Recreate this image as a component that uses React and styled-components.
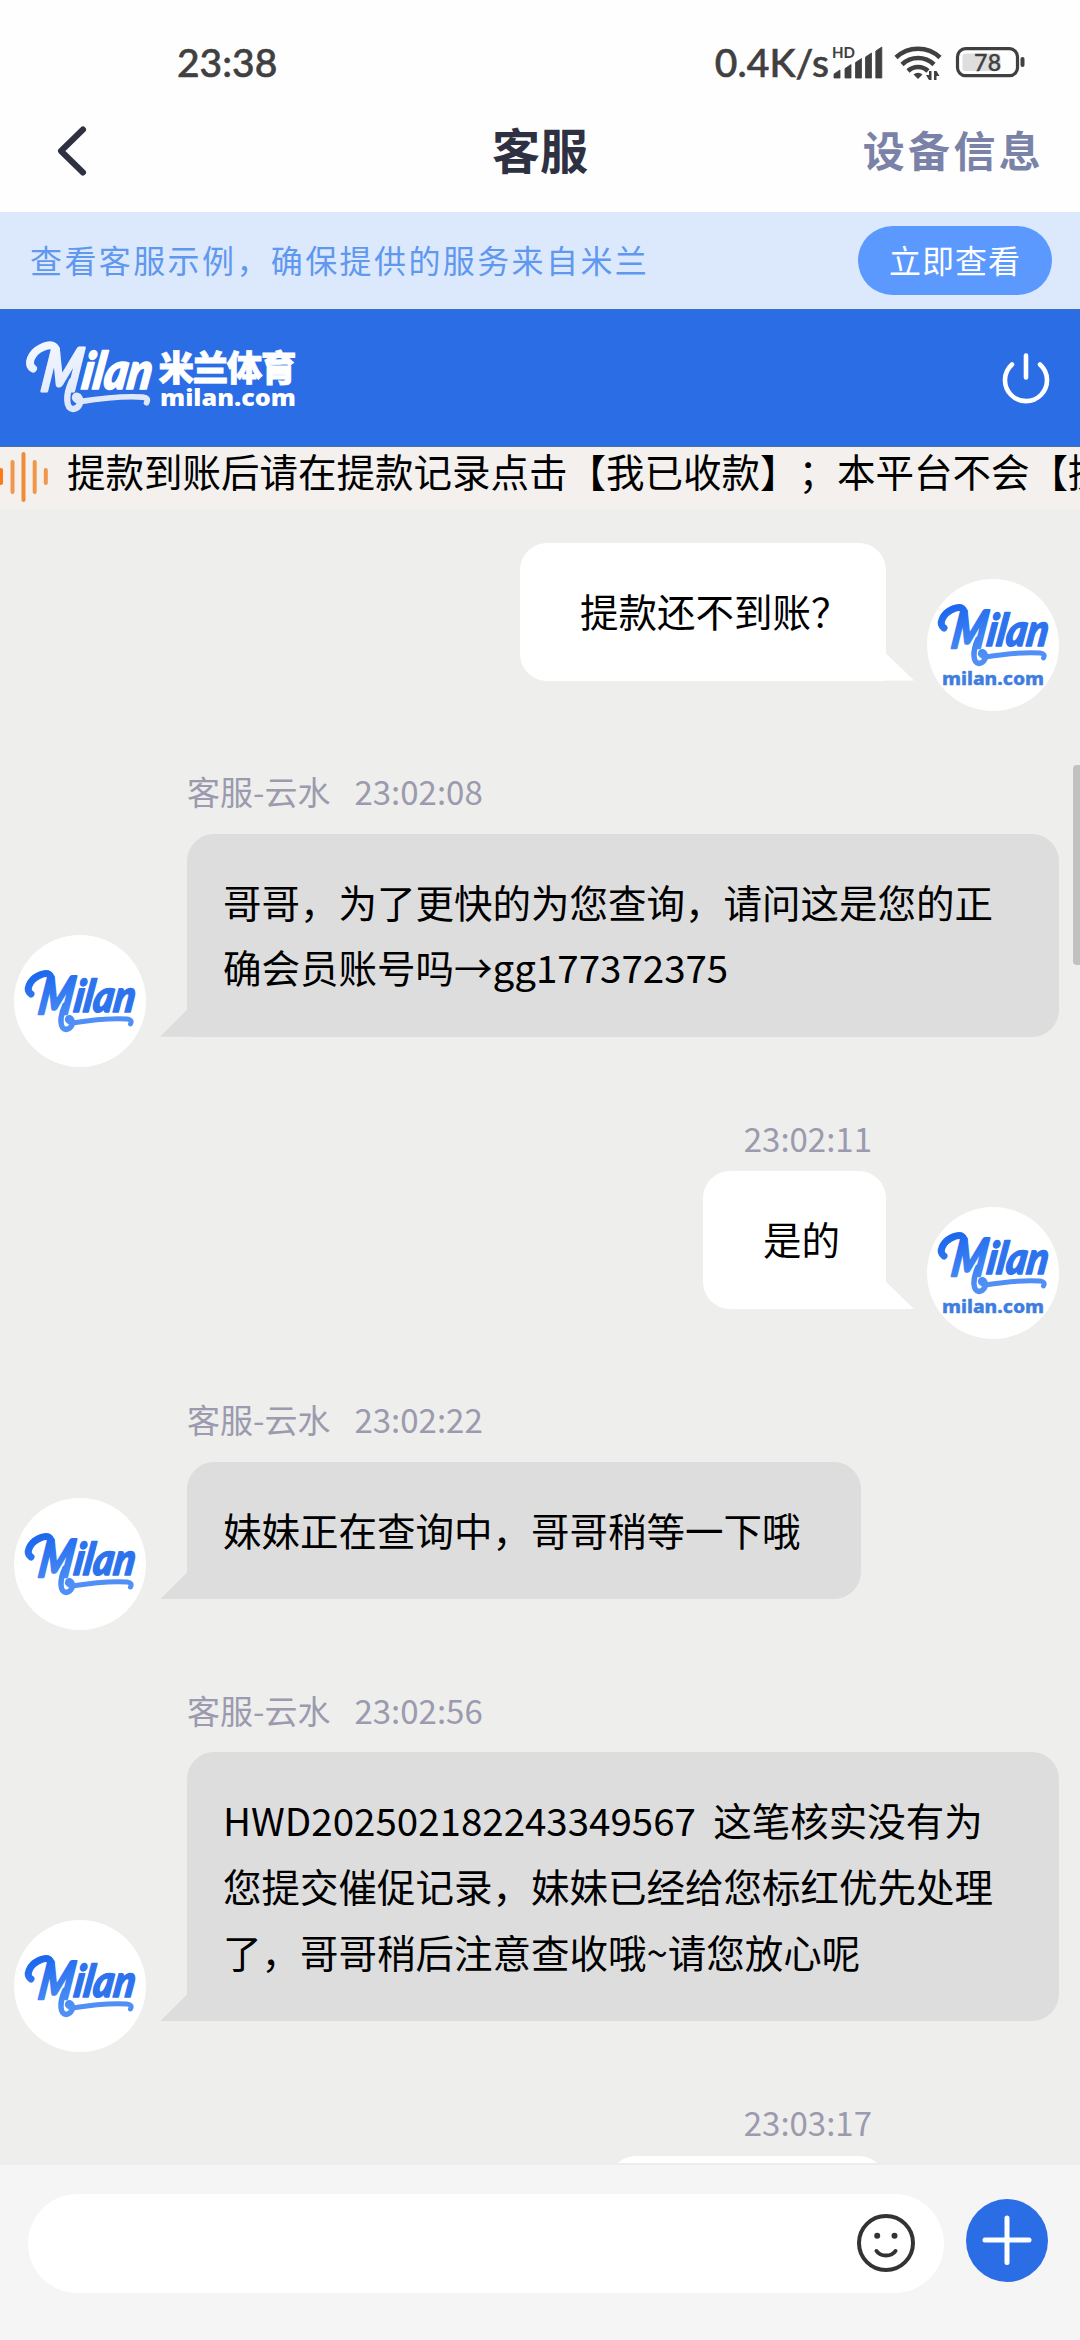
import styled, { createGlobalStyle, css } from "styled-components"

const GlobalStyle = createGlobalStyle`
  * {
    box-sizing: border-box;
  }

  body {
    margin: 0;
    font-family: "Noto Sans CJK SC", sans-serif;
    background: #ededeb;
  }

  svg {
    display: block;
    flex-shrink: 0;
    overflow: visible;
  }
`

const Screen = styled.div`
  width: 1080px;
  height: 2340px;
  display: flex;
  flex-direction: column;
  overflow: hidden;
`

const StatusBar = styled.div`
  height: 90px;
  padding: 34px 54px 0 177px;
  display: flex;
  align-items: flex-start;
  justify-content: space-between;
  background: #fefefe;
  color: #404040;
`

const StatusText = styled.span`
  font-family: Lato, sans-serif;
  font-size: 39px;
  font-weight: 500;
  line-height: 56px;
  letter-spacing: ${(props) => props.$spacing || "0"};
  -webkit-text-stroke: 0.6px #404040;
`

const StatusRight = styled.div`
  display: flex;
  align-items: flex-start;
`

const StatusIcons = styled.svg`
  margin: 6px 0 0 2px;
`

const NavBar = styled.header`
  height: 122px;
  padding: 0 39px 0 48px;
  display: grid;
  grid-template-columns: 1fr auto 1fr;
  align-items: center;
  background: #fefefe;
`

const NavTitle = styled.h1`
  margin: 0 9px 6px 0;
  font-size: 48px;
  line-height: 70px;
  font-weight: 700;
  color: #2e3142;
`

const NavAction = styled.span`
  justify-self: end;
  margin: 0 -3px 4px 0;
  font-size: 42px;
  line-height: 60px;
  font-weight: 700;
  letter-spacing: 3.3px;
  color: #7b82a7;
`

const Tip = styled.div`
  height: 97px;
  padding: 0 28px 0 30px;
  display: flex;
  align-items: center;
  justify-content: space-between;
  background: #dce9fd;
  color: #5f98ee;
  font-size: 32px;
  letter-spacing: 2.4px;
`

const TipText = styled.span`
  padding-bottom: 4px;
`

const TipButton = styled.button`
  width: 194px;
  height: 69px;
  padding: 0 0 3px;
  border: none;
  border-radius: 35px;
  background: #5b99ff;
  color: #fff;
  font-family: inherit;
  font-size: 32px;
  letter-spacing: 1px;
`

const BrandBar = styled.div`
  height: 138px;
  padding: 0 29px 0 25px;
  display: flex;
  align-items: center;
  justify-content: space-between;
  background: #2b6de5;
  border-top: 1px solid #3c70bd;
  border-bottom: 1px solid #4a6ea6;
`

const Notice = styled.div`
  height: 62px;
  display: flex;
  align-items: flex-start;
  overflow: hidden;
  background: #f3f0ed;
`

const NoticeText = styled.span`
  margin-left: 18px;
  flex-shrink: 0;
  font-size: 38.5px;
  line-height: 47px;
  white-space: nowrap;
  text-spacing-trim: space-all;
  color: #000;
`

const Chat = styled.main`
  position: relative;
  height: 1656px;
  padding-top: 34px;
  overflow: hidden;
  background: #eeeeec;
  border-bottom: 2px solid #ededeb;
`

const ScrollThumb = styled.div`
  position: absolute;
  top: 256px;
  right: 0;
  width: 7px;
  height: 200px;
  border-radius: 4px 0 0 4px;
  background: #c1c1c1;
`

const MessageRow = styled.div`
  display: flex;
  flex-direction: ${(props) => (props.$mine ? "row-reverse" : "row")};
  align-items: flex-end;
  gap: 41px;
  padding: 0 21px 0 14px;
  margin-top: ${(props) => (props.$mine ? "81px" : "90.5px")};

  &:first-child {
    margin-top: 0;
  }
`

const MessageBody = styled.div`
  display: flex;
  flex-direction: column;
  align-items: ${(props) => (props.$mine ? "flex-end" : "flex-start")};
`

const Meta = styled.div`
  display: flex;
  gap: 24px;
  font-size: 33px;
  line-height: 40px;
  color: #9b9aae;
  margin: ${(props) => (props.$mine ? "0 14px 13.5px 0" : "0 0 22.5px")};
`

const Bubble = styled.div`
  position: relative;
  width: ${(props) => (props.$width ? `${props.$width}px` : "auto")};
  min-height: 137.6px;
  padding: 35px 60px 37px 36px;
  border-radius: 27px 27px 27px 0;
  background: #ddd;
  color: #000;
  font-size: 38.5px;
  line-height: 65.6px;
  white-space: pre-wrap;

  &::after {
    content: "";
    position: absolute;
    bottom: 0;
    left: -27px;
    width: 28px;
    height: 28px;
    background: inherit;
    clip-path: polygon(100% 0, 100% 100%, 0 100%);
  }

  ${(props) =>
    props.$mine &&
    css`
      padding: 35px 0 37px 60px;
      border-radius: 27px 27px 0 27px;
      background: #fff;

      &::after {
        left: auto;
        right: -28px;
        width: 29px;
        clip-path: polygon(0 0, 100% 100%, 0 100%);
      }
    `}
`

const Avatar = styled.div`
  width: 132px;
  height: 132px;
  flex-shrink: 0;
  display: flex;
  flex-direction: column;
  align-items: center;
  padding-top: ${(props) => (props.$mine ? "24px" : "34px")};
  margin-bottom: -30.5px;
  border-radius: 50%;
  background: #fff;
`

const Composer = styled.footer`
  height: 175px;
  padding: 29px 32px 0 28px;
  display: flex;
  align-items: flex-start;
  gap: 22px;
  background: #f5f5f5;
`

const InputBox = styled.div`
  flex: 1;
  height: 99px;
  padding-right: 28px;
  display: flex;
  align-items: center;
  justify-content: flex-end;
  border-radius: 50px;
  background: #fff;
`

const AddButton = styled.button`
  width: 82px;
  height: 83px;
  margin-top: 5px;
  padding: 0;
  display: flex;
  align-items: center;
  justify-content: center;
  border: none;
  border-radius: 50%;
  background: #2b6de5;
`

const messages = [
  { mine: true, text: "提款还不到账？", width: 366 },
  {
    name: "客服-云水",
    time: "23:02:08",
    text: "哥哥，为了更快的为您查询，请问这是您的正确会员账号吗→gg177372375",
    width: 872,
  },
  { mine: true, time: "23:02:11", text: "是的", width: 183 },
  { name: "客服-云水", time: "23:02:22", text: "妹妹正在查询中，哥哥稍等一下哦" },
  {
    name: "客服-云水",
    time: "23:02:56",
    text: "HWD202502182243349567  这笔核实没有为您提交催促记录，妹妹已经给您标红优先处理了，哥哥稍后注意查收哦~请您放心呢",
    width: 872,
  },
  { mine: true, time: "23:03:17", text: "", width: 277 },
]

// lettering plus the curl and the underline that hang off the M
function MilanMark({ light, width = 113 }) {
  const id = light ? "milan-light" : "milan-blue"
  const lettering = light ? "#fff" : "#2e73ee"
  return (
    <svg width={width} height={(width * 65) / 113} viewBox="-2 -2 113 65">
      <defs>
        <linearGradient id={id} gradientUnits="userSpaceOnUse" x1="0" y1="0" x2="20" y2="60">
          <stop offset="0" stopColor={light ? "#f4f8ff" : "#1763ec"} />
          <stop offset="1" stopColor={light ? "#dfe8fa" : "#5090f6"} />
        </linearGradient>
      </defs>
      <g fontFamily="Lato, sans-serif" fontStyle="italic" fontWeight="900" strokeLinejoin="round">
        <text x="18" y="43" fontSize="52" textLength="34" lengthAdjust="spacingAndGlyphs" transform="skewX(-9)" fill={`url(#${id})`} stroke={`url(#${id})`} strokeWidth="2.500">
          M
        </text>
        <text x="53" y="41" fontSize="45" textLength="61" lengthAdjust="spacingAndGlyphs" transform="skewX(-9)" fill={lettering} stroke={lettering} strokeWidth="1.500">
          ilan
        </text>
      </g>
      <g fill="none" stroke={`url(#${id})`} strokeLinecap="round" strokeLinejoin="round">
        <path d="M5 23C-1 19 4 9 12 5C18 2 23 1 25 6" strokeWidth="7" />
        <path d="M39 34C33 47 34 58 40 58.500C46 58 48 51 45 47.500C42 45 40 49 44 51" strokeWidth="5.500" />
        <path d="M46 52C65 49 86 47 101 48C105 48.500 106 50 104.500 53" strokeWidth="5" />
      </g>
    </svg>
  )
}

function AvatarDomain() {
  return (
    <svg width="104" height="20" viewBox="0 0 104 20">
      <text x="1" y="16.500" fontFamily="'Noto Sans', sans-serif" fontWeight="800" fontSize="18" fill="#3f7de0" stroke="#3f7de0" strokeWidth="0.400" textLength="102" lengthAdjust="spacingAndGlyphs">
        milan.com
      </text>
    </svg>
  )
}

function BrandLogo() {
  return (
    <svg width="275" height="76" viewBox="0 0 275 76">
      <MilanMark light width={129} />
      <g fill="#fff" fontWeight="900">
        <text x="133.500" y="41" fontFamily="'Noto Sans CJK SC', sans-serif" fontSize="35.500" textLength="138" stroke="#fff" strokeWidth="0.800">
          米兰体育
        </text>
        <text x="135" y="66" fontFamily="'Noto Sans', sans-serif" fontSize="23" textLength="136" lengthAdjust="spacingAndGlyphs">
          milan.com
        </text>
      </g>
    </svg>
  )
}

function PowerIcon() {
  return (
    <svg width="50" height="54" viewBox="0 0 50 54" fill="none" stroke="#fff" strokeWidth="4.600" strokeLinecap="round">
      <path d="M25 4.500v22" />
      <path d="M11 13.500a21 21 0 1 0 28 0" />
    </svg>
  )
}

function BackIcon() {
  return (
    <svg width="50" height="56" viewBox="0 0 50 56" fill="none" stroke="#2e3142" strokeWidth="6" strokeLinecap="round" strokeLinejoin="round">
      <path d="M35 6.500L13 28l22 21.500" />
    </svg>
  )
}

function SoundWave() {
  return (
    <svg width="49" height="62" viewBox="0 0 49 62" strokeWidth="4" strokeLinecap="round" stroke="#f0974a">
      <path d="M1 23v13" stroke="#ff7a14" />
      <path d="M12.500 15v30M34.700 15v30M45.800 23v13" />
      <path d="M23.500 7v46" stroke="#f08c38" />
    </svg>
  )
}

function PhoneIndicators() {
  return (
    <StatusIcons width="195" height="44" viewBox="0 0 195 44" fill="#404040">
      <text x="1" y="18" fontFamily="Lato, sans-serif" fontWeight="700" fontSize="16" textLength="23" lengthAdjust="spacingAndGlyphs">
        HD
      </text>
      <path d="M3 34l6-4v8H3zM14 28.500l6-4V38h-6zM24.500 22.500l6-4V38h-6zM34.500 17l6-4v25h-6zM44.800 11l6-4v31h-6z" stroke="#404040" strokeWidth="0.800" strokeLinejoin="round" />
      <g fill="none" stroke="#404040" strokeWidth="4.600">
        <path d="M65 17.500a32 32 0 0 1 44 0" />
        <path d="M71 24.500a23 23 0 0 1 32 0" />
        <path d="M77 31a14.500 14.500 0 0 1 20 0" />
      </g>
      <path d="M87 39l-4.500-4.500a6.500 6.500 0 0 1 9 0z" />
      <path d="M98 31h2.500v9h-2.500l-3-5h3zM103 40v-9h2.500l3 5h-3v4z" />
      <rect x="126.500" y="8.700" width="60" height="27" rx="8" fill="none" stroke="#404040" strokeWidth="3.200" />
      <rect x="131.500" y="13.500" width="38" height="17.500" rx="3" fill="#dedede" />
      <rect x="189.500" y="17" width="4" height="10" rx="2" />
      <text x="143" y="30.500" fontFamily="Lato, sans-serif" fontWeight="500" fontSize="23" textLength="27" stroke="#404040" strokeWidth="0.400">
        78
      </text>
    </StatusIcons>
  )
}

function SmileIcon() {
  return (
    <svg width="60" height="60" viewBox="0 0 60 60" fill="none" stroke="#333" strokeWidth="4" strokeLinecap="round">
      <circle cx="30" cy="29" r="27" />
      <path d="M20.500 37c4 6 15 6 19 0" />
      <circle cx="21.200" cy="21.800" r="3" fill="#333" stroke="none" />
      <circle cx="38.500" cy="21.800" r="3" fill="#333" stroke="none" />
    </svg>
  )
}

function PlusIcon() {
  return (
    <svg width="54" height="54" viewBox="0 0 54 54" stroke="#fff" strokeWidth="5" strokeLinecap="round">
      <path d="M27 4v44.500M5 26h44" />
    </svg>
  )
}

function Message({ mine, name, time, text, width }) {
  return (
    <MessageRow $mine={mine}>
      <Avatar $mine={mine}>
        <MilanMark />
        {mine && <AvatarDomain />}
      </Avatar>
      <MessageBody $mine={mine}>
        {time && (
          <Meta $mine={mine}>
            {name && <span>{name}</span>}
            <span>{time}</span>
          </Meta>
        )}
        <Bubble $mine={mine} $width={width}>
          {text}
        </Bubble>
      </MessageBody>
    </MessageRow>
  )
}

function App() {
  return (
    <Screen>
      <GlobalStyle />
      <StatusBar>
        <StatusText>23:38</StatusText>
        <StatusRight>
          <StatusText $spacing="0.1px">0.4K/s</StatusText>
          <PhoneIndicators />
        </StatusRight>
      </StatusBar>

      <NavBar>
        <BackIcon />
        <NavTitle>客服</NavTitle>
        <NavAction>设备信息</NavAction>
      </NavBar>

      <Tip>
        <TipText>查看客服示例，确保提供的服务来自米兰</TipText>
        <TipButton>立即查看</TipButton>
      </Tip>

      <BrandBar>
        <BrandLogo />
        <PowerIcon />
      </BrandBar>

      <Notice>
        <SoundWave />
        <NoticeText>提款到账后请在提款记录点击【我已收款】；本平台不会【提</NoticeText>
      </Notice>

      <Chat>
        {messages.map((message, index) => (
          <Message key={index} {...message} />
        ))}
        <ScrollThumb />
      </Chat>

      <Composer>
        <InputBox>
          <SmileIcon />
        </InputBox>
        <AddButton>
          <PlusIcon />
        </AddButton>
      </Composer>
    </Screen>
  )
}

export default App
